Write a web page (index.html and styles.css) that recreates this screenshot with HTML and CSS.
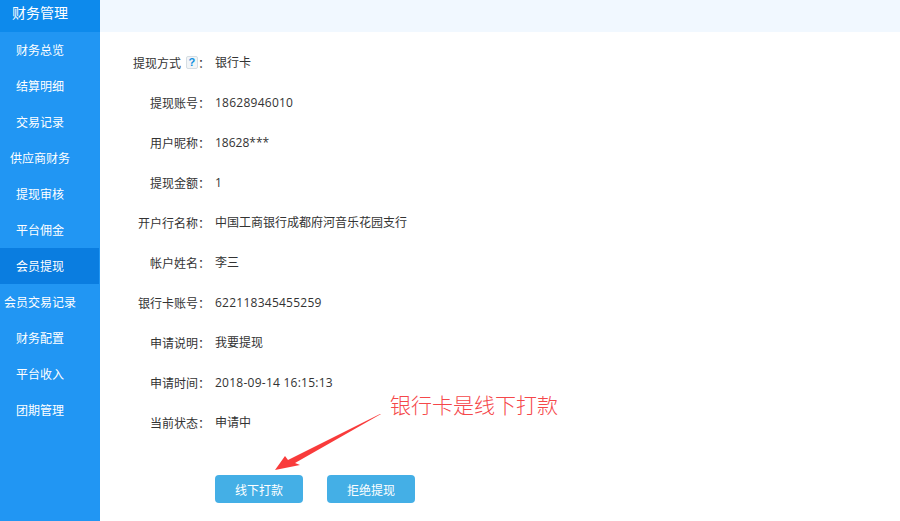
FILE: index.html
```html
<!DOCTYPE html>
<html lang="zh-CN">
<head>
<meta charset="utf-8">
<title>会员提现</title>
<link rel="stylesheet" href="styles.css">
</head>
<body>
<div class="app">
  <aside class="sidebar">
    <div class="side-title">财务管理</div>
    <a class="side-item">财务总览</a>
    <a class="side-item">结算明细</a>
    <a class="side-item">交易记录</a>
    <a class="side-item">供应商财务</a>
    <a class="side-item">提现审核</a>
    <a class="side-item">平台佣金</a>
    <a class="side-item active">会员提现</a>
    <a class="side-item">会员交易记录</a>
    <a class="side-item">财务配置</a>
    <a class="side-item">平台收入</a>
    <a class="side-item">团期管理</a>
  </aside>
  <main class="main">
    <div class="topbar"></div>
    <div class="details">
      <div class="row"><div class="label">提现方式<span class="help">?</span>：</div><div class="value">银行卡</div></div>
      <div class="row"><div class="label">提现账号：</div><div class="value num">18628946010</div></div>
      <div class="row"><div class="label">用户昵称：</div><div class="value">18628***</div></div>
      <div class="row"><div class="label">提现金额：</div><div class="value">1</div></div>
      <div class="row"><div class="label">开户行名称：</div><div class="value">中国工商银行成都府河音乐花园支行</div></div>
      <div class="row"><div class="label">帐户姓名：</div><div class="value">李三</div></div>
      <div class="row"><div class="label">银行卡账号：</div><div class="value num">622118345455259</div></div>
      <div class="row"><div class="label">申请说明：</div><div class="value">我要提现</div></div>
      <div class="row"><div class="label">申请时间：</div><div class="value num">2018-09-14 16:15:13</div></div>
      <div class="row"><div class="label">当前状态：</div><div class="value">申请中</div></div>
    </div>
    <div class="actions">
      <button class="btn">线下打款</button>
      <button class="btn">拒绝提现</button>
    </div>
    <div class="note">银行卡是线下打款</div>
    <svg class="arrow" width="110" height="60" viewBox="0 0 110 60">
      <polygon points="106,1 14,47 11,43 1,57 26,52 21,50 107,1" fill="#f93b3b"/>
    </svg>
  </main>
</div>
</body>
</html>
```
FILE: styles.css
```css
* { box-sizing: border-box; }
html, body { margin: 0; height: 100%; overflow: hidden; }
body {
  font-family: "Noto Sans CJK SC", "Open Sans", sans-serif;
  font-size: 12px;
  color: #333;
  background: #fff;
}
.app { display: flex; height: 521px; }
.sidebar {
  width: 100px;
  flex: none;
  background: #2196f3;
  color: #fff;
  padding-right: 1px;
}
.side-title {
  height: 32px;
  margin-right: -1px;
  line-height: 24px;
  padding-right: 20px;
  text-align: center;
  font-size: 14px;
  background: #0d8aec;
}
.side-item {
  display: block;
  height: 36px;
  line-height: 36px;
  padding-right: 19px;
  text-align: center;
  white-space: nowrap;
}
.side-item.active { background: #0a7de0; }
.main { position: relative; flex: 1; min-width: 0; }
.topbar { height: 32px; background: #f1f8ff; }
.details { padding-top: 10px; }
.row { display: flex; height: 40px; align-items: center; }
.label {
  width: 110px;
  margin-right: 5px;
  flex: none;
  display: flex;
  justify-content: flex-end;
  align-items: center;
  white-space: nowrap;
}
.value {
  font-family: "Open Sans", "Noto Sans CJK SC", sans-serif;
  white-space: nowrap;
}
.num { letter-spacing: 0.25px; }
.help {
  width: 12px;
  height: 13px;
  margin-left: 5px;
  border: 1px solid #d5dde3;
  border-radius: 2px;
  background: #f2f5f7;
  color: #0f8fe0;
  font: bold 11px/11px "Liberation Sans", sans-serif;
  text-align: center;
}
.actions { display: flex; gap: 24px; padding: 33px 0 0 115px; }
.btn {
  width: 88px;
  height: 28px;
  padding: 0;
  border: 0;
  border-radius: 4px;
  background: #44afe6;
  color: #fff;
  font: inherit;
}
.note {
  position: absolute;
  left: 290px;
  top: 390px;
  font-size: 21px;
  line-height: 28px;
  font-weight: 300;
  color: #f5474a;
  white-space: nowrap;
}
.arrow { position: absolute; left: 174px; top: 413px; }
```
